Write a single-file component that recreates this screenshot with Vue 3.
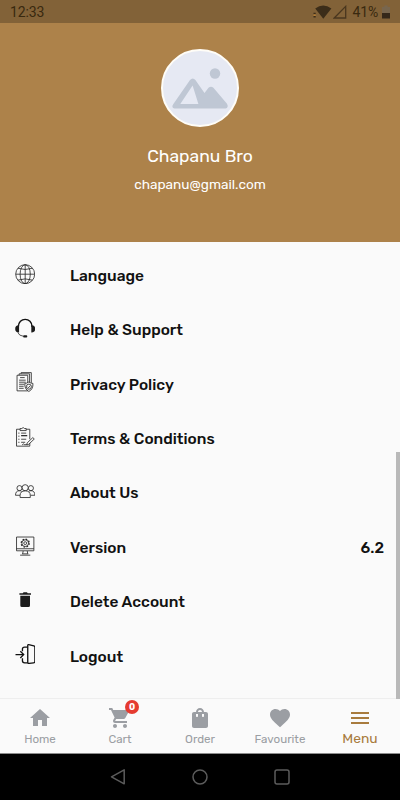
<template>
  <div class="screen">
    <header class="status-bar">
      <span class="clock">12:33</span>
      <div class="status-icons">
        <svg class="wifi" viewBox="0 0 20 16">
          <path d="M2.2 4.6Q10.2-1.8 18.4 4.6L10.3 14.8z" fill="#3c2d19" />
          <path d="M.5 9.5h2.200M.5 12.800h2.200" stroke="#3c2d19" stroke-width="1.400" />
          <path d="M.5 11.100h2.200" stroke="#c98a36" stroke-width="1.200" />
        </svg>
        <svg class="signal" viewBox="0 0 14 14">
          <path d="M1.200 13L12.700 1.400V13z" fill="none" stroke="#4a371f" stroke-width="1.300" />
        </svg>
        <span class="percent">41%</span>
        <svg class="battery" viewBox="0 0 8 14">
          <path d="M0 2h2.300V.6h3.400V2H8v6H0z" fill="#78664e" />
          <path d="M0 8h8v5.500H0z" fill="#35281a" />
        </svg>
      </div>
    </header>

    <section class="profile">
      <div class="avatar">
        <svg viewBox="0 0 74 74">
          <circle cx="52" cy="22.500" r="5.200" />
          <path
            fill-rule="evenodd"
            d="M10.200 53.200L27 29.100Q29.800 26 32.400 29.100L41.500 42L45.500 36.800Q48 34.500 50.400 36.800L64 52.700Q66 56.500 62.500 57.500H11.500Q8 56.500 10.200 53.200zM29.600 34.400L17.300 53.100H35.400z"
          />
        </svg>
      </div>
      <h1 class="name">Chapanu Bro</h1>
      <p class="email">chapanu@gmail.com</p>
    </section>

    <main class="menu">
      <button v-for="item in items" :key="item.id" type="button" class="row">
        <svg class="row-icon" :class="item.id" viewBox="0 0 20 20">
          <template v-if="item.id === 'language'">
            <circle cx="10" cy="10" r="9.300" />
            <ellipse cx="10" cy="10" rx="5" ry="9.300" />
            <path d="M10 .7v18.600M.7 10h18.600M3 4.200q7 2.400 14 0M3 15.800q7-2.400 14 0" />
          </template>
          <template v-else-if="item.id === 'support'">
            <path d="M3.200 8.800C3.200-1.100 16.800-1.100 16.800 8.800" stroke-width="1.400" />
            <path class="solid" d="M4 7.200v7C1.500 14.400.2 13 .2 10.700S1.500 7 4 7.200zM16 7.200v7c2.500.2 3.800-1.200 3.800-3.500S18.500 7 16 7.200z" />
            <path d="M2.900 14.400q1 3 5.300 3.500" stroke-width=".7" />
            <rect class="solid" x="8" y="17" width="4" height="2.200" rx=".8" />
          </template>
          <template v-else-if="item.id === 'privacy'">
            <path d="M2 3.200h10.500v15.300H2zM4 3V1.800h10.300v9M6 1.700V.6h10v10" />
            <path d="M5 5.500h4.500M4 8h6.500M4 10h6.500M4 12h5M4 14h4.500M4 16h4.500" />
            <path class="paper" d="M13.600 9.800q2 1.400 4 1.400.3 5.800-4 7.900-4.300-2.100-4-7.900 2 0 4-1.400z" />
            <circle cx="13.600" cy="14.400" r="2.500" />
            <path d="M12.300 14.400l1 1 1.700-2" />
          </template>
          <template v-else-if="item.id === 'terms'">
            <path d="M5 2.200H1.500v16.600h13V15M11 2.200h3.500V12" />
            <path d="M5 1.500h1.700q1.300-2 2.600 0H11v2H5z" />
            <path d="M3.200 6h1.200M3.200 9h1.200M3.200 12h1.200M3.200 15h1.200M6 6h5M6 12h5M6 15h4" />
            <path d="M6 8.500h6" stroke-width="1.200" />
            <path class="paper" d="M11.500 17.600l.5-2.100 5.500-5.100 1.400 1.400-5.500 5.200z" />
            <path d="M7 17.500q2-2 2.500 0l2-.4" />
          </template>
          <template v-else-if="item.id === 'about'">
            <circle cx="4.400" cy="7" r="2.500" />
            <circle cx="15.600" cy="7" r="2.500" />
            <path d="M5 14H.5q0-4.500 3.900-4.500 1.400 0 2 .8M15 14h4.500q0-4.500-3.900-4.500-1.400 0-2 .8" />
            <circle class="paper" cx="10" cy="6.600" r="3" />
            <path class="paper" d="M5 16.200v-2Q5 9.700 10 9.700t5 4.500v2z" />
          </template>
          <template v-else-if="item.id === 'version'">
            <path d="M1.500 1h17v13.500h-17zM1.500 12.500h17M8 14.700l-.5 2.800M12 14.700l.5 2.800M5 18.800h10M7 17.500h6" />
            <circle cx="10" cy="7" r="3.900" stroke-width="1.300" stroke-dasharray="1.600 1.460" />
            <circle cx="10" cy="7" r="3.300" />
            <circle cx="10" cy="7" r="1.400" />
          </template>
          <template v-else-if="item.id === 'delete'">
            <path class="solid" d="M4.300 3.200h3.300l.8-.9h3.300l.8.900h3.200v1.500H4.300zM5.200 5.600h9.500v9.600q0 1.500-1.500 1.500H6.700q-1.500 0-1.500-1.500z" />
          </template>
          <template v-else>
            <path d="M12.500 1.500q0-1 1-.8l5 1.100q1 .3 1 1.300v14.100q0 1.300-1.300 1.300l-4.200.5q-1.500.2-1.500-1.200z" />
            <path d="M12.300 3H9.500Q7.300 3 7.300 5v2M7.300 14v2.500q0 2 2.200 2h3M.5 10.400h7.800M5.200 7.200l3.300 3.200-3.300 3.300" />
          </template>
        </svg>
        <span class="row-label">{{ item.label }}</span>
        <span v-if="item.value" class="row-value">{{ item.value }}</span>
      </button>
      <span class="scrollbar" aria-hidden="true"></span>
    </main>

    <nav class="tabs">
      <button
        v-for="tab in tabs"
        :key="tab.label"
        type="button"
        class="tab"
        :class="{ active: tab.label === activeTab }"
        @click="activeTab = tab.label"
      >
        <span class="tab-icon">
          <svg viewBox="0 0 24 24"><path :d="tab.path" /></svg>
          <span v-if="tab.badge !== undefined" class="badge">{{ tab.badge }}</span>
        </span>
        <span class="tab-label">{{ tab.label }}</span>
      </button>
    </nav>

    <footer class="system-nav">
      <svg viewBox="0 0 18 18"><path d="M15.200 1.800v14L2.500 8.800z" /></svg>
      <svg viewBox="0 0 18 18"><circle cx="9" cy="9" r="7" /></svg>
      <svg viewBox="0 0 18 18"><rect x="2" y="2" width="14" height="14" rx="2" /></svg>
    </footer>
  </div>
</template>

<script setup>
import { ref } from 'vue'

const items = [
  { id: 'language', label: 'Language' },
  { id: 'support', label: 'Help & Support' },
  { id: 'privacy', label: 'Privacy Policy' },
  { id: 'terms', label: 'Terms & Conditions' },
  { id: 'about', label: 'About Us' },
  { id: 'version', label: 'Version', value: '6.2' },
  { id: 'delete', label: 'Delete Account' },
  { id: 'logout', label: 'Logout' },
]

const tabs = [
  { label: 'Home', path: 'M10 20v-6h4v6h5v-8h3L12 3 2 12h3v8z' },
  {
    label: 'Cart',
    badge: 0,
    path: 'M7 18c-1.100 0-1.990.9-1.990 2S5.900 22 7 22s2-.9 2-2-.9-2-2-2zM1 2v2h2l3.600 7.590-1.350 2.450c-.16.28-.25.61-.25.96 0 1.100.9 2 2 2h12v-2H7.420c-.14 0-.25-.11-.25-.25l.03-.12.9-1.630h7.450c.75 0 1.410-.41 1.750-1.030l3.580-6.490A1 1 0 0 0 20 4H5.210l-.94-2H1zm16 16c-1.100 0-1.990.9-1.990 2s.89 2 1.990 2 2-.9 2-2-.9-2-2-2z',
  },
  {
    label: 'Order',
    path: 'M18 6h-2c0-2.210-1.790-4-4-4S8 3.790 8 6H6c-1.100 0-2 .9-2 2v12c0 1.100.9 2 2 2h12c1.100 0 2-.9 2-2V8c0-1.100-.9-2-2-2zm-8 4c0 .55-.45 1-1 1s-1-.45-1-1V8h2v2zm2-6c1.100 0 2 .9 2 2h-4c0-1.100.9-2 2-2zm4 6c0 .55-.45 1-1 1s-1-.45-1-1V8h2v2z',
  },
  {
    label: 'Favourite',
    path: 'M12 21.350l-1.450-1.320C5.400 15.360 2 12.280 2 8.500 2 5.420 4.420 3 7.500 3c1.740 0 3.410.81 4.500 2.090C13.090 3.810 14.760 3 16.500 3 19.580 3 22 5.420 22 8.500c0 3.780-3.400 6.860-8.550 11.540L12 21.350z',
  },
  { label: 'Menu', path: 'M3 18h18v-2H3v2zm0-5h18v-2H3v2zm0-7v2h18V6H3z' },
]

const activeTab = ref('Menu')
</script>

<style>
body {
  margin: 0;
}
</style>

<style scoped>
.screen {
  display: flex;
  flex-direction: column;
  width: 400px;
  height: 800px;
  overflow: hidden;
  background: #fafafa;
  font-family: Rubik, Roboto, 'Liberation Sans', sans-serif;
}

button {
  border: none;
  padding: 0;
  background: none;
  font-family: inherit;
  cursor: pointer;
}

svg {
  display: block;
  flex: none;
}

.status-bar {
  display: flex;
  justify-content: space-between;
  align-items: center;
  height: 23px;
  padding: 0 10px;
  background: #826238;
  color: #39290f;
  font-family: Roboto, sans-serif;
  font-size: 14px;
}

.clock {
  letter-spacing: -0.1px;
}

.status-icons {
  display: flex;
  align-items: center;
}

.wifi {
  width: 20px;
  height: 16px;
}

.signal {
  width: 14px;
  height: 14px;
}

.percent {
  margin: 0 4px 0 6px;
  letter-spacing: -0.2px;
}

.battery {
  width: 8px;
  height: 14px;
}

.profile {
  box-sizing: border-box;
  display: flex;
  flex-direction: column;
  align-items: center;
  height: 219px;
  padding-top: 25.5px;
  background: #ad824a;
  color: #fff;
}

.avatar {
  box-sizing: border-box;
  width: 78px;
  height: 78px;
  border: 2px solid #fffdf7;
  border-radius: 50%;
  overflow: hidden;
  background: #e6e9f3;
  fill: #bfc7d4;
}

.name {
  margin: 18.5px 0 0;
  font-size: 17.5px;
  font-weight: 400;
  line-height: 22px;
}

.email {
  margin: 9px 0 0;
  font-size: 13.6px;
  line-height: 16px;
}

.menu {
  position: relative;
  flex: 1;
  padding-top: 6.6px;
}

.row {
  box-sizing: border-box;
  display: flex;
  align-items: center;
  width: 100%;
  height: 54.4px;
  padding: 0 16px 0 15px;
  color: #111;
  font-size: 15.5px;
  font-weight: 500;
  text-align: left;
}

.row-icon {
  width: 20.4px;
  height: 20.4px;
  margin: 0 34.6px 4px 0;
  fill: none;
  stroke: #252525;
  stroke-width: 0.8;
}

.row-icon.support,
.row-icon.logout {
  stroke: #111;
}

.row-icon.logout {
  stroke-width: 1.3;
}

.solid {
  fill: #1b1b1b;
  stroke: none;
}

.paper {
  fill: #fafafa;
}

.row-label {
  flex: 1;
}

.scrollbar {
  position: absolute;
  right: 0;
  top: 210px;
  bottom: -1px;
  width: 4px;
  background: #b9b9b9;
}

.tabs {
  box-sizing: border-box;
  display: grid;
  grid-template-columns: repeat(5, 1fr);
  height: 56px;
  border-top: 1px solid #eeeeee;
  border-bottom: 1px solid #8c8c8c;
  background: #fafafa;
}

.tab {
  display: flex;
  flex-direction: column;
  align-items: center;
  padding-top: 7px;
  color: #9b9ea3;
  font-size: 11.6px;
}

.tab-icon {
  position: relative;
}

.tab-icon svg {
  width: 24px;
  height: 24px;
  fill: currentColor;
}

.tab-label {
  line-height: 18px;
}

.active {
  color: #a87b3d;
  font-size: 13.8px;
}

.active .tab-label {
  margin-top: -1px;
}

.badge {
  position: absolute;
  top: -6px;
  right: -7px;
  width: 14px;
  height: 14px;
  border-radius: 50%;
  background: #e53b30;
  color: #fff;
  font-size: 9px;
  font-weight: 700;
  line-height: 14px;
  text-align: center;
}

.system-nav {
  display: flex;
  justify-content: center;
  align-items: center;
  gap: 64px;
  height: 46px;
  background: #000;
}

.system-nav svg {
  width: 18px;
  height: 18px;
  fill: none;
  stroke: #5c5c5c;
  stroke-width: 1.5;
  stroke-linejoin: round;
}
</style>
